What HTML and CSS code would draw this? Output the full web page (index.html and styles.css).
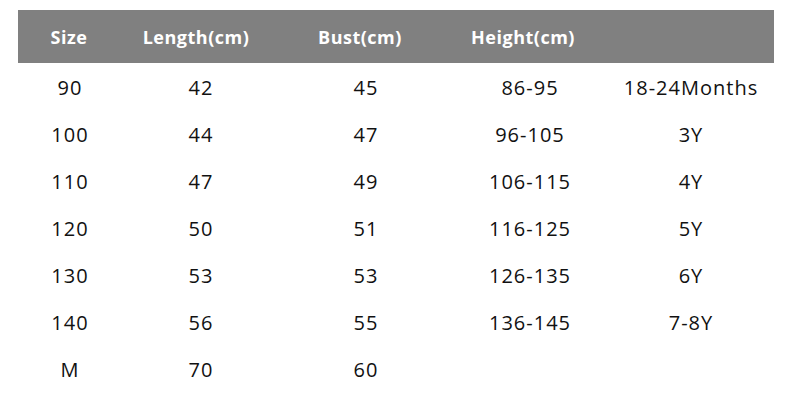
FILE: index.html
```html
<!DOCTYPE html>
<html>
<head>
<meta charset="utf-8">
<link rel="stylesheet" href="styles.css">
</head>
<body>
<div class="chart">
  <div class="row head">
    <div class="c c1">Size</div>
    <div class="c c2">Length(cm)</div>
    <div class="c c3">Bust(cm)</div>
    <div class="c c4">Height(cm)</div>
    <div class="c c5"></div>
  </div>
  <div class="row"><div class="c">90</div><div class="c">42</div><div class="c">45</div><div class="c">86-95</div><div class="c">18-24Months</div></div>
  <div class="row"><div class="c">100</div><div class="c">44</div><div class="c">47</div><div class="c">96-105</div><div class="c">3Y</div></div>
  <div class="row"><div class="c">110</div><div class="c">47</div><div class="c">49</div><div class="c">106-115</div><div class="c">4Y</div></div>
  <div class="row"><div class="c">120</div><div class="c">50</div><div class="c">51</div><div class="c">116-125</div><div class="c">5Y</div></div>
  <div class="row"><div class="c">130</div><div class="c">53</div><div class="c">53</div><div class="c">126-135</div><div class="c">6Y</div></div>
  <div class="row"><div class="c">140</div><div class="c">56</div><div class="c">55</div><div class="c">136-145</div><div class="c">7-8Y</div></div>
  <div class="row"><div class="c">M</div><div class="c">70</div><div class="c">60</div><div class="c"></div><div class="c"></div></div>
</div>
</body>
</html>
```
FILE: styles.css
```css
html, body {
  margin: 0;
  padding: 0;
  background: #fff;
}
body {
  font-family: "Open Sans", "Noto Sans", sans-serif;
  color: #111;
}
.chart {
  margin: 10px 0 0 18px;
  width: 756px;
}
.row {
  display: grid;
  grid-template-columns: 104px 158px 172px 156px 166px;
  height: 47px;
  align-items: center;
  font-size: 20px;
  letter-spacing: 1px;
}
.row .c {
  text-align: center;
  white-space: nowrap;
}
.row.head {
  height: 53px;
  background: #808080;
  color: #fff;
  font-weight: 700;
  font-size: 18px;
  letter-spacing: 0.5px;
  margin-bottom: 1px;
}
.head .c1 { padding-right: 2px; }
.head .c2 { padding-right: 10px; }
.head .c3 { padding-right: 12px; }
.head .c4 { padding-right: 14px; }
```
